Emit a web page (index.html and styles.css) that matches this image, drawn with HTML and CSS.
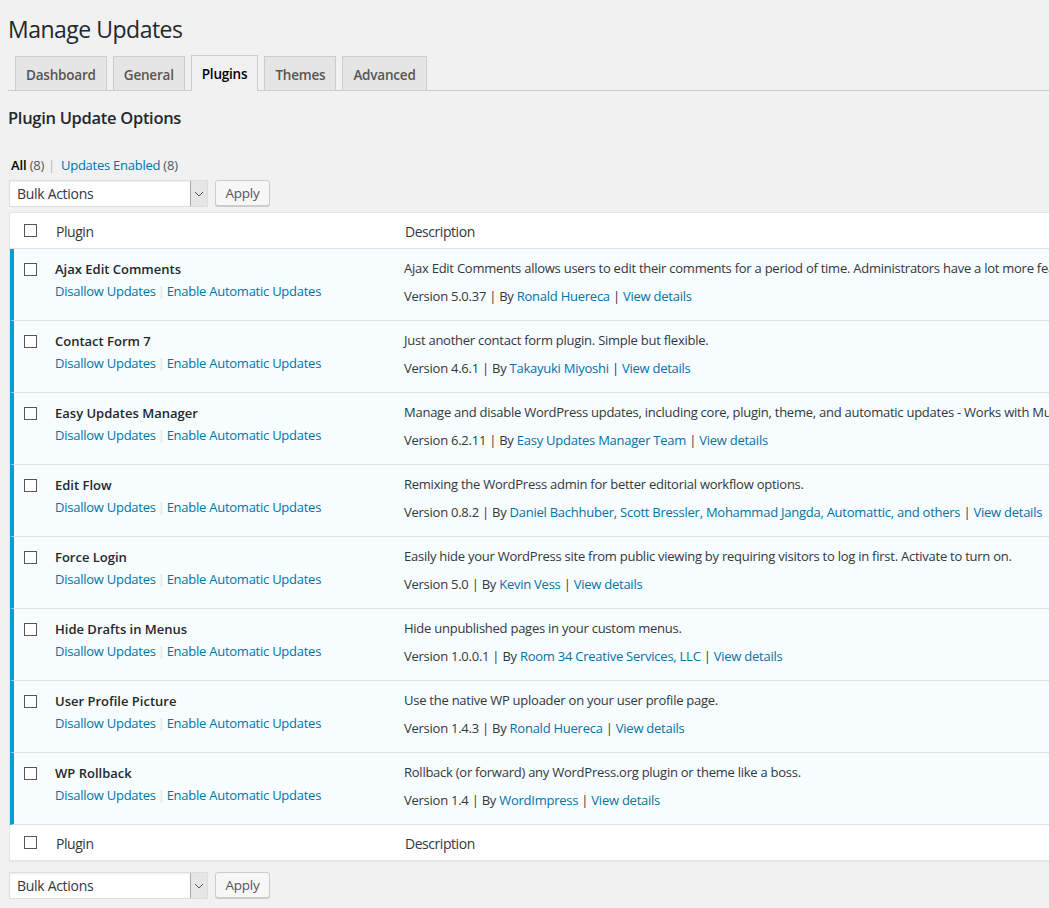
FILE: index.html
```html
<!DOCTYPE html>
<html>
<head>
<meta charset="utf-8">
<link rel="stylesheet" href="styles.css">
</head>
<body>
<div class="wrap">
  <h1 class="title">Manage Updates</h1>
  <nav class="tabs">
    <a class="tab">Dashboard</a>
    <a class="tab">General</a>
    <a class="tab active">Plugins</a>
    <a class="tab">Themes</a>
    <a class="tab">Advanced</a>
  </nav>
  <h2 class="subtitle">Plugin Update Options</h2>
  <ul class="subsub">
    <li><b>All</b> <span class="count">(8)</span></li>
    <li class="sep">|</li>
    <li><a>Updates Enabled <span class="count">(8)</span></a></li>
  </ul>
  <div class="bulk">
    <div class="select"><span>Bulk Actions</span><span class="arrow"><svg width="10" height="6" viewBox="0 0 10 6"><path d="M1 1l4 4 4-4" fill="none" stroke="#555" stroke-width="1"/></svg></span></div>
    <button class="btn">Apply</button>
  </div>
  <div class="table">
    <div class="row head">
      <div class="cb"><span class="box"></span></div>
      <div class="col-plugin hd">Plugin</div>
      <div class="col-desc hd">Description</div>
    </div>

    <div class="row item">
      <div class="cb"><span class="box"></span></div>
      <div class="col-plugin"><div class="name">Ajax Edit Comments</div><div class="actions"><a>Disallow Updates</a><i>|</i><a>Enable Automatic Updates</a></div></div>
      <div class="col-desc"><p>Ajax Edit Comments allows users to edit their comments for a period of time. Administrators have a lot more features, including the ability to edit comments directly on a post.</p><p class="ver">Version 5.0.37 | By <a>Ronald Huereca</a> | <a>View details</a></p></div>
    </div>
    <div class="row item">
      <div class="cb"><span class="box"></span></div>
      <div class="col-plugin"><div class="name">Contact Form 7</div><div class="actions"><a>Disallow Updates</a><i>|</i><a>Enable Automatic Updates</a></div></div>
      <div class="col-desc"><p>Just another contact form plugin. Simple but flexible.</p><p class="ver">Version 4.6.1 | By <a>Takayuki Miyoshi</a> | <a>View details</a></p></div>
    </div>
    <div class="row item">
      <div class="cb"><span class="box"></span></div>
      <div class="col-plugin"><div class="name">Easy Updates Manager</div><div class="actions"><a>Disallow Updates</a><i>|</i><a>Enable Automatic Updates</a></div></div>
      <div class="col-desc"><p>Manage and disable WordPress updates, including core, plugin, theme, and automatic updates - Works with Multisite and has built-in logging features.</p><p class="ver">Version 6.2.11 | By <a>Easy Updates Manager Team</a> | <a>View details</a></p></div>
    </div>
    <div class="row item">
      <div class="cb"><span class="box"></span></div>
      <div class="col-plugin"><div class="name">Edit Flow</div><div class="actions"><a>Disallow Updates</a><i>|</i><a>Enable Automatic Updates</a></div></div>
      <div class="col-desc"><p>Remixing the WordPress admin for better editorial workflow options.</p><p class="ver">Version 0.8.2 | By <a>Daniel Bachhuber, Scott Bressler, Mohammad Jangda, Automattic, and others</a> | <a>View details</a></p></div>
    </div>
    <div class="row item">
      <div class="cb"><span class="box"></span></div>
      <div class="col-plugin"><div class="name">Force Login</div><div class="actions"><a>Disallow Updates</a><i>|</i><a>Enable Automatic Updates</a></div></div>
      <div class="col-desc"><p>Easily hide your WordPress site from public viewing by requiring visitors to log in first. Activate to turn on.</p><p class="ver">Version 5.0 | By <a>Kevin Vess</a> | <a>View details</a></p></div>
    </div>
    <div class="row item">
      <div class="cb"><span class="box"></span></div>
      <div class="col-plugin"><div class="name">Hide Drafts in Menus</div><div class="actions"><a>Disallow Updates</a><i>|</i><a>Enable Automatic Updates</a></div></div>
      <div class="col-desc"><p>Hide unpublished pages in your custom menus.</p><p class="ver">Version 1.0.0.1 | By <a>Room 34 Creative Services, LLC</a> | <a>View details</a></p></div>
    </div>
    <div class="row item">
      <div class="cb"><span class="box"></span></div>
      <div class="col-plugin"><div class="name">User Profile Picture</div><div class="actions"><a>Disallow Updates</a><i>|</i><a>Enable Automatic Updates</a></div></div>
      <div class="col-desc"><p>Use the native WP uploader on your user profile page.</p><p class="ver">Version 1.4.3 | By <a>Ronald Huereca</a> | <a>View details</a></p></div>
    </div>
    <div class="row item">
      <div class="cb"><span class="box"></span></div>
      <div class="col-plugin"><div class="name">WP Rollback</div><div class="actions"><a>Disallow Updates</a><i>|</i><a>Enable Automatic Updates</a></div></div>
      <div class="col-desc"><p>Rollback (or forward) any WordPress.org plugin or theme like a boss.</p><p class="ver">Version 1.4 | By <a>WordImpress</a> | <a>View details</a></p></div>
    </div>

    <div class="row foot">
      <div class="cb"><span class="box"></span></div>
      <div class="col-plugin hd">Plugin</div>
      <div class="col-desc hd">Description</div>
    </div>
  </div>
  <div class="bulk bottom">
    <div class="select"><span>Bulk Actions</span><span class="arrow"><svg width="10" height="6" viewBox="0 0 10 6"><path d="M1 1l4 4 4-4" fill="none" stroke="#555" stroke-width="1"/></svg></span></div>
    <button class="btn">Apply</button>
  </div>
</div>
</body>
</html>
```

FILE: styles.css
```css
html, body {
  margin: 0;
  padding: 0;
  background: #f1f1f1;
  overflow: hidden;
}
body {
  font-family: "Open Sans", "Noto Sans", "Liberation Sans", sans-serif;
  font-size: 13px;
  letter-spacing: -0.25px;
  color: #444;
  width: 1049px;
  height: 908px;
}
.wrap {
  padding: 0 0 0 8px;
  width: 1600px;
}
.title {
  font-size: 23px;
  font-weight: 400;
  color: #23282d;
  margin: 0;
  padding: 15px 0 0 0;
  line-height: 29px;
  letter-spacing: -0.5px;
}
.tabs {
  display: flex;
  border-bottom: 1px solid #ccc;
  padding-left: 7px;
  margin-top: 12px;
  height: 35px;
  width: 1041px;
  box-sizing: border-box;
  align-items: flex-end;
}
.tab {
  display: block;
  background: #e5e5e5;
  border: 1px solid #ccc;
  border-bottom: none;
  margin-right: 6px;
  padding: 0 10px;
  height: 34px;
  line-height: 36px;
  font-size: 13.5px;
  font-weight: 600;
  color: #555;
  box-sizing: border-box;
  letter-spacing: -0.2px;
}
.tab.active {
  background: #f1f1f1;
  color: #000;
  height: 36px;
  margin-bottom: -1px;
}
.subtitle {
  font-size: 16.5px;
  font-weight: 600;
  color: #23282d;
  margin: 16px 0 0 0;
  line-height: 22px;
  letter-spacing: -0.3px;
}
.subsub {
  list-style: none;
  display: flex;
  margin: 26px 0 0 3px;
  padding: 0;
  line-height: 20px;
  font-size: 13px;
  color: #666;
  gap: 4px;
}
.subsub b { color: #000; font-weight: 600; letter-spacing: -0.1px; }
.subsub .count { color: #555; }
.subsub .sep { color: #b4b9be; padding: 0 2px 0 0; }
.subsub a { color: #0073aa; }
.subsub a .count { color: #555; }
.bulk {
  display: flex;
  gap: 7px;
  margin: 5px 0 0 1px;
  height: 27px;
}
.bulk.bottom { margin-top: 11px; }
.select {
  width: 199px;
  height: 27px;
  box-sizing: border-box;
  border: 1px solid #ddd;
  background: #fff;
  display: flex;
  justify-content: space-between;
  align-items: center;
  box-shadow: inset 0 1px 2px rgba(0,0,0,.07);
  color: #32373c;
  font-size: 14px;
  letter-spacing: -0.3px;
}
.select span:first-child { padding-left: 7px; }
.arrow {
  width: 16px;
  height: 25px;
  background: #e6e6e6;
  border-left: 1px solid #aaa;
  display: flex;
  align-items: center;
  justify-content: center;
}
.btn {
  font-family: inherit;
  font-size: 13.5px;
  letter-spacing: -0.2px;
  color: #555;
  background: #f7f7f7;
  border: 1px solid #ccc;
  border-radius: 3px;
  box-shadow: 0 1px 0 #ccc;
  height: 26px;
  width: 55px;
  padding: 0;
  line-height: 24px;
}
.table {
  margin-top: 5px;
  margin-left: 1px;
  width: 1500px;
  background: #fff;
  border: 1px solid #e5e5e5;
  box-shadow: 0 1px 1px rgba(0,0,0,.04);
}
.row {
  display: flex;
  box-sizing: border-box;
}
.row.head { height: 36px; border-bottom: 1px solid #e1e1e1; align-items: center; }
.row.foot { height: 35px; align-items: center; }
.row.item {
  height: 72px;
  background: #f7fcfe;
  border-left: 4px solid #00a0d2;
  border-bottom: 1px solid #e1e1e1;
  padding-top: 9px;
}
.cb {
  width: 42px;
  padding-left: 14px;
  box-sizing: border-box;
  flex: none;
}
.row.item .cb { width: 38px; padding-left: 10px; padding-top: 5px; }
.box {
  display: block;
  width: 11px;
  height: 11px;
  border: 1px solid #555;
  background: #fff;
}
.col-plugin {
  width: 353px;
  flex: none;
  padding-left: 4px;
  box-sizing: border-box;
}
.row.item .col-plugin { padding-left: 3px; }
.hd { color: #32373c; font-size: 14px; padding-top: 1px; letter-spacing: -0.45px; }
.col-desc { flex: 1; white-space: nowrap; }
.row.item .col-desc { margin-left: -1px; }
.name {
  font-weight: 600;
  color: #23282d;
  font-size: 13px;
  line-height: 22px;
  letter-spacing: 0;
}
.actions { color: #0073aa; line-height: 22px; }
.actions a { color: #0073aa; }
.actions i { font-style: normal; color: #ddd; padding: 0 2px; }
.col-desc p {
  margin: 0;
  line-height: 20px;
  color: #32373c;
}
.col-desc p.ver { margin-top: 8px; color: #32373c; }
.col-desc a { color: #0073aa; }
```
